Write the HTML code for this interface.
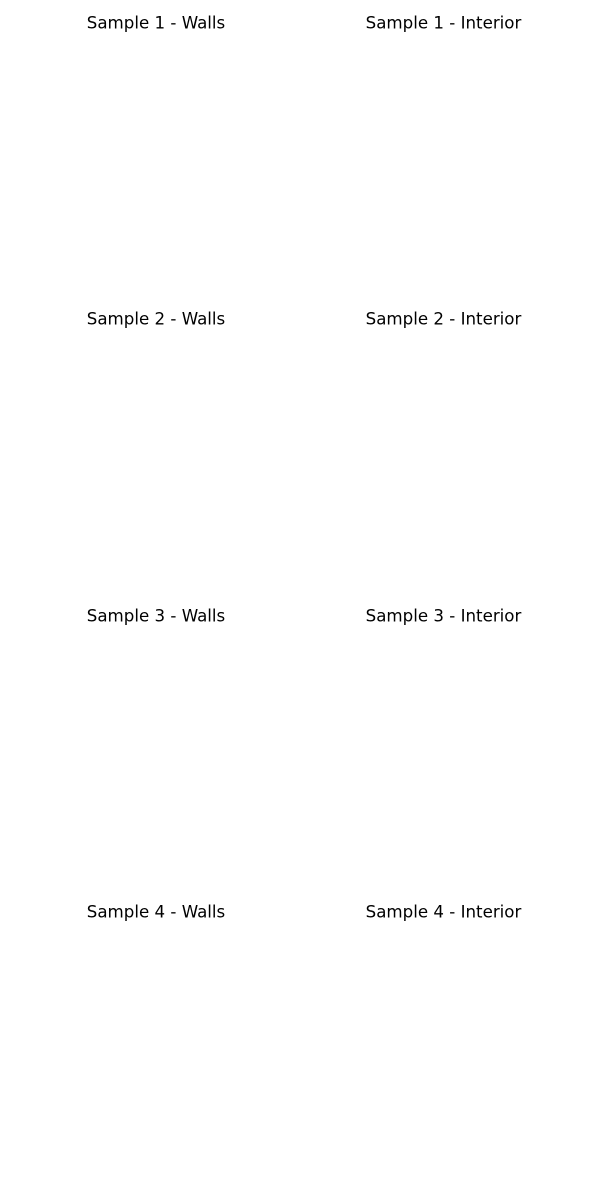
<!DOCTYPE html>
<html><head><meta charset="utf-8"><style>
html,body{margin:0;padding:0;background:#fff;width:600px;height:1200px;overflow:hidden}
svg{display:block}
text{font-family:"DejaVu Sans",sans-serif;font-size:16.67px;fill:#000;text-anchor:middle}
</style></head><body>
<svg width="600" height="1200" xmlns="http://www.w3.org/2000/svg">
<text x="156" y="28.5">Sample 1 - Walls</text>
<text x="443.5" y="28.5">Sample 1 - Interior</text>
<text x="156" y="324.5">Sample 2 - Walls</text>
<text x="443.5" y="324.5">Sample 2 - Interior</text>
<text x="156" y="621.5">Sample 3 - Walls</text>
<text x="443.5" y="621.5">Sample 3 - Interior</text>
<text x="156" y="917.5">Sample 4 - Walls</text>
<text x="443.5" y="917.5">Sample 4 - Interior</text>
</svg>
</body></html>
